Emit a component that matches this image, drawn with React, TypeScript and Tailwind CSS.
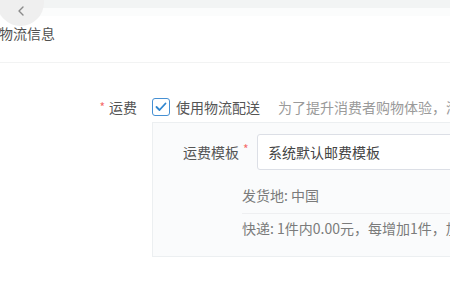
import React from "react";

function Required({ className = "" }: { className?: string }) {
  return <span className={`text-[#f56c6c] text-[12px] ${className}`}>*</span>;
}

export default function App() {
  return (
    <div className="relative w-[450px] h-[300px] overflow-hidden bg-white font-['Noto_Sans_CJK_SC','Noto_Sans',sans-serif] text-[14px] leading-[20px] text-[#555]">
      {/* top strip */}
      <div className="h-2 bg-[#f2f4f4]" />
      <div className="h-2 bg-[#fbfcfc]" />

      {/* back button */}
      <div className="absolute left-[-3px] top-[-21px] w-[47px] h-[47px] rounded-full bg-[#efefef] flex items-end justify-center pb-[10px]">
        <svg width="8" height="10" viewBox="0 0 8 10" fill="none">
          <path d="M6 1 L2 5 L6 9" stroke="#8a8a8a" strokeWidth="1.4" strokeLinecap="round" strokeLinejoin="round" />
        </svg>
      </div>

      {/* section title */}
      <div className="h-[47px] border-b border-[#f2f3f3] pt-[7px]">
        <span className="block ml-[-1px] text-[#505050]">物流信息</span>
      </div>

      <div className="pt-[34px]">
        {/* shipping row */}
        <div className="flex items-center h-5 whitespace-nowrap">
          <div className="w-[137px] shrink-0 flex items-center justify-end gap-[4px]">
            <Required />
            <span>运费</span>
          </div>
          <div className="ml-[15px] shrink-0 w-[18px] h-[18px] rounded-[3px] border border-[#4690d3] bg-white flex items-center justify-center">
            <svg width="12" height="10" viewBox="0 0 12 10" fill="none">
              <path d="M1.5 5 L4.5 8 L10.5 1.5" stroke="#2f86cf" strokeWidth="1.8" strokeLinecap="round" strokeLinejoin="round" />
            </svg>
          </div>
          <span className="ml-[6px] shrink-0">使用物流配送</span>
          <span className="ml-[18px] shrink-0 text-[#9a9a9a]">为了提升消费者购物体验，淘宝</span>
        </div>

        {/* template panel */}
        <div className="mt-[5px] ml-[152px] w-[330px] h-[135px] border border-[#eceff1] bg-[#fafbfc] pt-[11px]">
          <div className="flex items-center">
            <div className="w-[104px] shrink-0 pl-[30px] flex items-start">
              <span className="whitespace-nowrap">运费模板</span>
              <Required className="ml-[4px] leading-[14px]" />
            </div>
            <div className="flex-1 h-[36px] border border-[#dcdfe6] rounded-[3px] bg-white flex items-center pl-[10px] text-[#444] whitespace-nowrap">
              系统默认邮费模板
            </div>
          </div>
          <div className="ml-[89px] mt-[15px] text-[#7b7b7b]">
            <div className="pb-[8px] border-b border-[#eeeff1] whitespace-nowrap">发货地: 中国</div>
            <div className="pt-[4px] whitespace-nowrap">快递: 1件内0.00元，每增加1件，加0.00元</div>
          </div>
        </div>
      </div>
    </div>
  );
}
